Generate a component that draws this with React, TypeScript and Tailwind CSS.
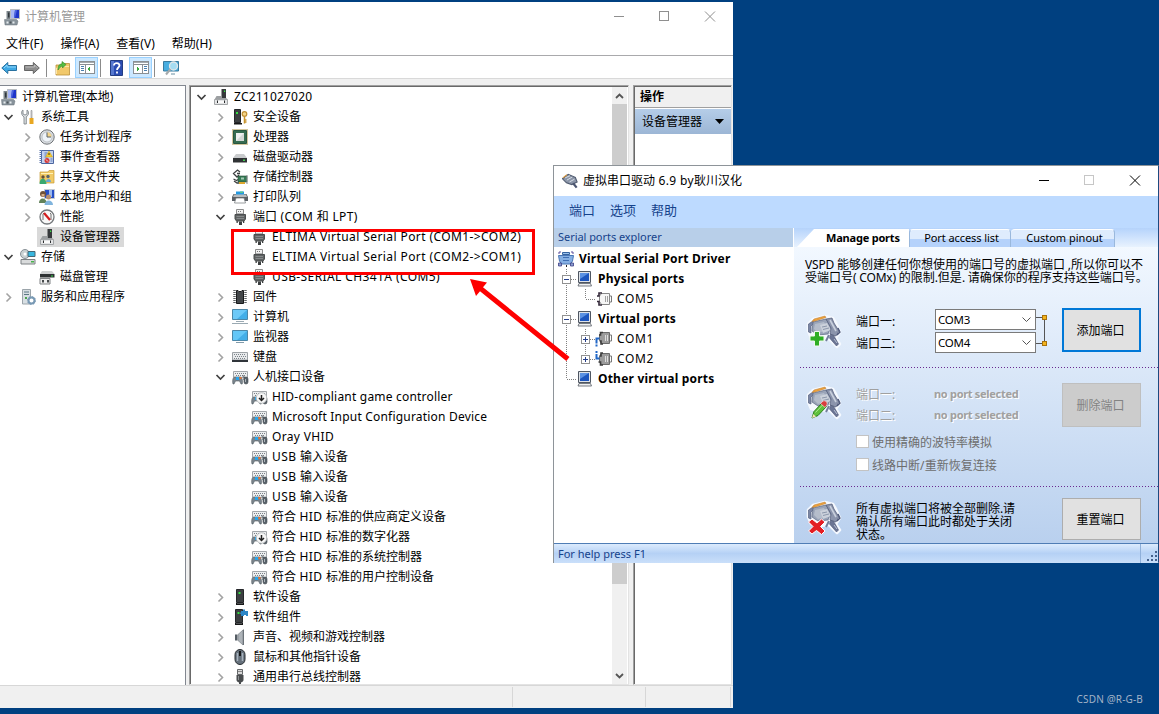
import React from 'react';
import clsx from 'clsx';

interface IconMap {
  [key: string]: React.ReactNode;
}

interface TreeItem {
  level: number;
  icon: string;
  label: string;
  state?: 'open' | 'closed';
  selected?: boolean;
  latin?: string;
}

const hidBase = (
  <>
    <path d="M1.500 2.500h14v6h-14z" fill="#eceeef" stroke="#a3a7ab" />
    <path d="M3 4.500h11M4 6.500h10" stroke="#7b8187" strokeDasharray="1 1" />
    <path d="M1 15c-.8-3-.3-7 2-7h5c2.300 0 3 4 2.200 7H9l-1.500-3h-4L2 15z" fill="#7b858d" stroke="#535c63" strokeWidth=".6" />
    <path d="M4 8h3v3H4z" fill="#2aa5ea" />
    <path d="M7.500 8h2v2h-2z" fill="#e07334" />
    <path d="M10.500 7c2-1 1.500 2 1.500 4" stroke="#454d53" />
    <rect x="12" y="8" width="4" height="7" rx="2" fill="#59636b" stroke="#3d444a" strokeWidth=".6" />
    <path d="M13.500 10v3" stroke="#aeb5ba" />
  </>
);

const pcBase = (
  <>
    <path d="M6.500.5h9v9h-9z" fill="#1f35c9" stroke="#b9bdc0" />
    <path d="M7 1h4l-1 8H7z" fill="#a6b6f5" />
    <path d="M11 1h2l-2 8h-1z" fill="#4e67e0" />
    <path d="M2.500 2h3.500v8H2.500z" fill="#7b848a" />
    <path d="M4 3.500h1.500v5H4z" fill="#30373c" />
    <path d="M.5 10.500h12l1.500 1.500-1 4H1z" fill="#87929a" stroke="#69737a" strokeWidth=".5" />
    <path d="M2.500 12.500h2v2h-2zM8.500 12.500h2v2h-2z" fill="#e6ebee" />
    <path d="M5.500 12.500h2v2h-2z" fill="#4c555b" />
  </>
);

const serverBox = (
  <>
    <path d="M4.500.5h7v13h-7z" fill="#3c3f41" stroke="#25272a" />
    <path d="M6.500 3h2v2h-2z" fill="#35df43" />
    <path d="M4 14h8v2H4z" fill="#171819" />
    <path d="M5 14.500h6" stroke="#77797a" strokeWidth=".6" />
  </>
);

const deviceBase = (
  <>
    <path d="M8.500 0H13v9H8.500z" fill="#36393b" />
    <path d="M11 1.500h1.200v1.500H11z" fill="#38e044" />
    <path d="M3.500 7h5v2H13l2 1.500H1.500z" fill="#9da0a2" />
    <path d="M1.500 10.500h13v5h-13z" fill="#e3e4e5" stroke="#a2a5a7" />
    <path d="M4 11.500h1v2.500H4zM11 11.500h1v2.500h-1z" fill="#2a2c2e" />
    <path d="M5 12h6v2H5z" fill="#fafafa" />
  </>
);

const icons: IconMap = {
  pc: pcBase,
  device: deviceBase,
  tools: (
    <>
      <path d="M3 1v4l2 1 2-1V1c2 1 2 5 0 6l-.7 1v7H4V8C1 6 1 2 3 1z" fill="#dcdfe1" stroke="#747b80" strokeWidth=".8" />
      <path d="M11 1.500h1V9h-1z" stroke="#8a8c8d" fill="#ddd" strokeWidth=".6" />
      <path d="M9.500 9h4v6h-4z" fill="#e8a722" />
    </>
  ),
  clock: (
    <>
      <circle cx="8" cy="8" r="7.200" fill="#d9dde1" stroke="#6f7377" />
      <circle cx="8" cy="8" r="5" fill="#eef3f8" stroke="#a4a9ae" strokeWidth=".6" />
      <path d="M8 3v5h4.500A4.500 4.500 0 0 0 8 3.200z" fill="#f4d58c" />
      <path d="M8 3.500V8h4" stroke="#58636c" fill="none" />
    </>
  ),
  event: (
    <>
      <path d="M2.500 1.500h12v13h-12z" fill="#c3d2ee" stroke="#4c66a0" />
      <path d="M1.500 1v14" stroke="#5d77ac" strokeWidth="2" strokeDasharray="1 1" />
      <path d="M5.500 4h3M5.500 6h2M5.500 8h3M11.500 10h2M11.500 12h2" stroke="#5c7abb" />
      <path d="M10 2l3.500 6h-7z" fill="#f4cb30" stroke="#c59c1b" strokeWidth=".5" />
      <path d="M10 4v2" stroke="#423507" />
      <circle cx="8" cy="11.500" r="2.500" fill="#d53939" />
      <path d="M7 10.500l2 2" stroke="#fff" strokeWidth=".8" />
    </>
  ),
  share: (
    <>
      <path d="M1 3h8l1-1.500h5V14H1z" fill="#f1ca65" stroke="#c79b38" strokeWidth=".7" />
      <path d="M2 4.500h12" stroke="#fff2b8" />
      <circle cx="4" cy="8" r="1.700" fill="#634d38" />
      <circle cx="9" cy="7.500" r="1.700" fill="#56626e" />
      <path d="M.5 15c0-7 6.500-7 7 0z" fill="#38a870" />
      <path d="M7 13c0-4 5-4 5 0z" fill="#68a5d8" />
    </>
  ),
  users: (
    <>
      <path d="M5.500.5h10v9h-10z" fill="#274fc5" stroke="#c4cbd2" />
      <path d="M10 1h3v7h-3z" fill="#9bb9ef" />
      <circle cx="4" cy="5" r="3" fill="#715239" />
      <path d="M2.500 5h3v2.500h-3z" fill="#d8ad85" />
      <circle cx="9.500" cy="8" r="2.500" fill="#b9906d" />
      <path d="M0 14c0-6 7-6 8 0z" fill="#62825a" />
      <path d="M5.500 16c0-6 8.500-6 8.500 0z" fill="#80b4dd" />
    </>
  ),
  perf: (
    <>
      <circle cx="8" cy="8" r="7" fill="#f8f8f8" stroke="#75797c" strokeWidth="1.300" />
      <path d="M4 11V5l1-1M11 4l1 1v6" stroke="#717171" fill="none" />
      <path d="M5 4l6 7" stroke="#d41c1c" strokeWidth="2.200" />
    </>
  ),
  storage: (
    <>
      <circle cx="5" cy="5" r="4.500" fill="#c9d1d3" stroke="#8a9298" />
      <circle cx="5" cy="5" r="1.500" fill="#fff" />
      <path d="M8 2.500h7v5H8z" fill="#38b7df" stroke="#476774" />
      <path d="M1 10.500h14v4.500H1z" fill="#d9dbdc" stroke="#7d8184" />
      <path d="M11 12h3v1.500h-3z" fill="#46b24a" />
    </>
  ),
  diskmgmt: (
    <>
      <path d="M3 2h10l2.500 3H1z" fill="#cfd1d2" />
      <path d="M1 5h14.500v3.500H1z" fill="#2e3133" />
      <path d="M12 6.500h2v1h-2z" fill="#37dc4a" />
      <path d="M1 9.500h10v5.500H1z" fill="#eee" stroke="#808385" />
      <path d="M3 11h2v2.500H3zM8 11h2v2.500H8z" fill="#45484a" />
    </>
  ),
  services: (
    <>
      <path d="M2.500.5h8V15h-8z" fill="#d8dfe3" stroke="#9ba4aa" />
      <path d="M4 3h5M4 5.500h5" stroke="#5c7885" />
      <path d="M5 8h2v2H5z" fill="#4ba34f" />
      <circle cx="11.500" cy="11.500" r="3" fill="#fff" stroke="#7899b4" strokeWidth="2" />
      <circle cx="11.500" cy="11.500" r="4" fill="none" stroke="#7899b4" strokeDasharray="1.500 1.600" />
    </>
  ),
  security: (
    <>
      <path d="M2.500.5h6v13h-6z" fill="#3c3f41" stroke="#25272a" />
      <path d="M2 14h8v1.500H2z" fill="#171819" />
      <path d="M4 3h2v2H4z" fill="#35df43" />
      <circle cx="12.500" cy="5" r="2.300" fill="#f4d58a" stroke="#c08f31" strokeWidth="1.200" />
      <path d="M12.500 8v6.500M12.500 11h2M12.500 13h2" stroke="#c8942d" strokeWidth="1.500" />
    </>
  ),
  cpu: (
    <>
      <path d="M.5.5h15v15H.5z" stroke="#a98f3c" strokeDasharray="1 1" />
      <path d="M1.500 1.500h13v13h-13z" fill="#366c50" stroke="#2a5740" />
      <path d="M4 4h8v8H4z" fill="#d3d8d5" />
      <path d="M4 4h8l-8 8z" fill="#eef0ef" />
    </>
  ),
  disk: (
    <>
      <path d="M4 5h8l3 4H1z" fill="#c9cbcd" />
      <path d="M1 9h14v4.500H1z" fill="#303234" />
      <path d="M11 10.500h2v1.500h-2z" fill="#42ce52" />
    </>
  ),
  storctl: (
    <>
      <path d="M8 3L5.500 1 1.500 4.500 5 8l2-2M5 4.500h3M1.500 10l3 1.500L8 9.500M2 12l3 2h2" fill="none" stroke="#3d4042" strokeWidth="1.300" />
      <path d="M6 7h9v6H6z" fill="#367a55" stroke="#254b37" strokeWidth=".6" />
      <path d="M9 8.500h3v2H9z" fill="#a4cab4" />
      <path d="M7 13h6v2H7z" fill="#dda72d" />
      <path d="M15 6v9" stroke="#8a8e90" />
    </>
  ),
  printer: (
    <>
      <path d="M4 2.500h8V6H4z" fill="#2499e0" />
      <path d="M8 2.500h3V4H8z" fill="#54c28d" />
      <path d="M1.500 5H4v1h8V5h2.500L16 8v4H0V8z" fill="#5b6065" />
      <path d="M2 5.500h12L15 8H1z" fill="#b6babd" />
      <path d="M4 9h8l1.500 5h-11z" fill="#fff" stroke="#6f7477" strokeWidth=".7" />
    </>
  ),
  port: (
    <>
      <path d="M4.500.5h7v5h-7z" fill="#f1f1f1" stroke="#8c8c8c" />
      <path d="M6 2.500h4M5.500 4.500h5" stroke="#777" strokeDasharray="1 1" />
      <path d="M3 5.500h10.500v4.500L12 12H4.500L3 10z" fill="#5f6263" stroke="#4b4e4f" />
      <path d="M4.500 7.500h7.500M4.500 9.500h7.500" stroke="#85898a" />
      <path d="M7 12.500h3V16H7zM4.500 12h1.300v2H4.500zM11 12h1.300v2H11z" fill="#3d4041" />
    </>
  ),
  firmware: (
    <>
      <path d="M2.500 1v14M13.500 1v14" stroke="#606466" strokeWidth="2.500" strokeDasharray="1 1" />
      <path d="M4.500 1.500h1.500l1 1h2l1-1h1.500v13h-7z" fill="#424648" stroke="#191b1c" />
    </>
  ),
  computer: (
    <>
      <path d="M.5.5h15v10H.5z" fill="#43aee8" stroke="#4c87a8" />
      <path d="M1 1h14L5 10H1z" fill="#6cc9f8" />
      <path d="M4 12.500h8M0 14.500h16" stroke="#9baab3" />
    </>
  ),
  monitor: (
    <>
      <path d="M.5 1.500h15v10H.5z" fill="#43aee8" stroke="#4c87a8" />
      <path d="M1 2h14L5 11H1z" fill="#64c7f7" />
      <path d="M4 13.500h8" stroke="#829baa" />
    </>
  ),
  keyboard: (
    <>
      <path d="M.5 3.500h15V11H.5z" fill="#e8eaec" stroke="#9da2a6" />
      <path d="M2 5.500h12M3 7.500h11M2 9.500h12" stroke="#7c8389" strokeDasharray="1 1" />
      <path d="M0 11h16v2H0z" fill="#30353a" />
    </>
  ),
  hid: hidBase,
  hidDown: (
    <>
      {hidBase}
      <circle cx="10.500" cy="9" r="5.300" fill="#f7f7f7" stroke="#b4b7b9" strokeWidth=".8" />
      <path d="M10.500 6v5M8 9l2.500 2.500L13 9" fill="none" stroke="#222" strokeWidth="1.500" />
    </>
  ),
  software: serverBox,
  component: (
    <>
      <g transform="translate(-1)">{serverBox}</g>
      <path d="M9 2h2V.5h2V2h3v5h-2v-1h-2v1H9V5h-.8V3.500H9z" fill="#2d86c6" />
    </>
  ),
  sound: (
    <>
      <path d="M3 5.500h2.500v6H3z" fill="#555d64" />
      <path d="M6 5.500L11 1v15l-5-4.500z" fill="#adb3b8" stroke="#747b81" strokeWidth=".6" />
      <path d="M11.500.5v15.500" stroke="#6b7278" />
    </>
  ),
  mouse: (
    <>
      <rect x="3" y=".5" width="10" height="15" rx="5" fill="#66717c" stroke="#282d31" />
      <path d="M5.500 4v8M10.500 4v8" stroke="#a7b2bd" strokeWidth="1.500" />
      <path d="M8 2v5" stroke="#17191a" strokeWidth="2" />
    </>
  ),
  usb: (
    <>
      <path d="M5.500.5h5v5h-5z" fill="#d9d9d9" stroke="#646769" />
      <path d="M6.500 2.500h1M8.500 2.500h1" stroke="#333" />
      <path d="M4.500 6h7v5c0 1-1 2-2.500 2.500V16H7v-2.500C5.500 13 4.500 12 4.500 11z" fill="#4a4d4f" />
      <path d="M6.500 7v4" stroke="#8c9092" />
    </>
  ),
  vspd: (
    <>
      <path d="M4.500 1.500h7v2h-7z" fill="#9bc1eb" stroke="#3462a0" />
      <path d="M.5 4.500h15l-1 5.500-2 3h-9l-2-3z" fill="#85afe3" stroke="#4b76b5" />
      <path d="M5 6.500h6M5 9.500h6" stroke="#3f6fb4" />
      <path d="M.5 12h3v3h-3zM12.500 12h3v3h-3z" fill="#8b9fd0" stroke="#3d3f86" strokeWidth=".8" />
      <path d="M1 3V1h2M13 1h2v2" stroke="#5b4d9b" />
      <path d="M8.500 14v2" stroke="#222" />
    </>
  ),
  screen: (
    <>
      <path d="M1.500.5h12v11h-12z" fill="#dfe3e8" stroke="#4e5662" />
      <path d="M3 2h9v8H3z" fill="#1c55be" />
      <path d="M3 2h9L3 8z" fill="#5a91e3" />
      <path d="M2 12.500h11.500l1 2.500H1z" fill="#f0f1f2" stroke="#555c64" strokeWidth=".8" />
    </>
  ),
  comWhite: (
    <>
      <path d="M5.500 2.500h8v11h-8l-2-3V5z" fill="#f6f6f6" stroke="#888" />
      <path d="M9.500 5v6M11.500 5v6" stroke="#a0a0a0" />
      <path d="M1 5h2V2h3M1 10.500h2V14h3" fill="none" stroke="#352a3b" strokeWidth="1.600" />
      <path d="M14 5h1.500v6H14" fill="none" stroke="#777" />
    </>
  ),
  comA: (
    <>
      <path d="M5.500 1.500h8v11h-8l-2-3V4z" fill="#9b9b9b" stroke="#6a6a6a" />
      <path d="M9.500 4v6M11.500 4v6" stroke="#ddd" />
      <path d="M3 4h1.500V1.500H7M4 10h1v3h2" fill="none" stroke="#3d3d3d" strokeWidth="1.600" />
      <path d="M14 4h1.500v6H14" fill="none" stroke="#777" />
      <path d="M.5 15.500V7.500H3.500" fill="none" stroke="#2268c8" strokeWidth="2" strokeDasharray="2 1 9" />
    </>
  ),
  comB: (
    <>
      <path d="M5.500 2.500h8v11h-8l-2-3V5z" fill="#9b9b9b" stroke="#6a6a6a" />
      <path d="M9.500 5v6M11.500 5v6" stroke="#ddd" />
      <path d="M4 5h1V2h2M2.500 11h2v3H7" fill="none" stroke="#3d3d3d" strokeWidth="1.600" />
      <path d="M14 5h1.500v6H14" fill="none" stroke="#777" />
      <path d="M.5 0v7.500H3.500" fill="none" stroke="#2268c8" strokeWidth="2" strokeDasharray="2 1 9" />
    </>
  ),
};

const Icon = ({ name }: { name: string }) => (
  <svg className="h-4 w-4 shrink-0 overflow-visible" viewBox="0 0 16 16" fill="none">
    {icons[name]}
  </svg>
);

const Label = ({ text, latin = 'tracking-[0.2px]' }: { text: string; latin?: string }) => (
  <span className="whitespace-pre">
    {text.split(/([\x20-\x7e]+)/).map((part, i) => (
      <span key={i} className={i % 2 ? latin : undefined}>
        {part}
      </span>
    ))}
  </span>
);

const Chevron = ({ state }: { state?: 'open' | 'closed' }) => (
  <svg className="h-4 w-4 shrink-0" viewBox="0 0 16 16" fill="none">
    {state === 'open' && <path d="M4.500 6L8.500 10l4-4" stroke="#404040" strokeWidth="1.700" />}
    {state === 'closed' && <path d="M6.500 4.500l4 4-4 4" stroke="#a3a3a3" strokeWidth="1.600" />}
  </svg>
);

const indents = ['pl-0', 'pl-[19px]', 'pl-[38px]'];

const TreeRow = ({ item }: { item: TreeItem }) => (
  <div className={clsx('flex h-5 shrink-0 items-center', indents[item.level])}>
    <Chevron state={item.state} />
    <div className={clsx('ml-0.5 flex h-5 items-center gap-[5px] pl-0.5', item.selected && 'bg-[#d9d9d9] pr-1')}>
      <Icon name={item.icon} />
      <Label text={item.label} latin={item.latin} />
    </div>
  </div>
);

const consoleTree: TreeItem[] = [
  { level: 0, icon: 'tools', label: '系统工具', state: 'open' },
  { level: 1, icon: 'clock', label: '任务计划程序', state: 'closed' },
  { level: 1, icon: 'event', label: '事件查看器', state: 'closed' },
  { level: 1, icon: 'share', label: '共享文件夹', state: 'closed' },
  { level: 1, icon: 'users', label: '本地用户和组', state: 'closed' },
  { level: 1, icon: 'perf', label: '性能', state: 'closed' },
  { level: 1, icon: 'device', label: '设备管理器', selected: true },
  { level: 0, icon: 'storage', label: '存储', state: 'open' },
  { level: 1, icon: 'diskmgmt', label: '磁盘管理' },
  { level: 0, icon: 'services', label: '服务和应用程序', state: 'closed' },
];

const deviceTree: TreeItem[] = [
  { level: 0, icon: 'device', label: 'ZC211027020', state: 'open' },
  { level: 1, icon: 'security', label: '安全设备', state: 'closed' },
  { level: 1, icon: 'cpu', label: '处理器', state: 'closed' },
  { level: 1, icon: 'disk', label: '磁盘驱动器', state: 'closed' },
  { level: 1, icon: 'storctl', label: '存储控制器', state: 'closed' },
  { level: 1, icon: 'printer', label: '打印队列', state: 'closed' },
  { level: 1, icon: 'port', label: '端口 (COM 和 LPT)', state: 'open', latin: 'tracking-[0.4px]' },
  { level: 2, icon: 'port', label: 'ELTIMA Virtual Serial Port (COM1->COM2)', latin: 'tracking-[0.41px]' },
  { level: 2, icon: 'port', label: 'ELTIMA Virtual Serial Port (COM2->COM1)', latin: 'tracking-[0.41px]' },
  { level: 2, icon: 'port', label: 'USB-SERIAL CH341A (COM5)', latin: 'tracking-[0.4px]' },
  { level: 1, icon: 'firmware', label: '固件', state: 'closed' },
  { level: 1, icon: 'computer', label: '计算机', state: 'closed' },
  { level: 1, icon: 'monitor', label: '监视器', state: 'closed' },
  { level: 1, icon: 'keyboard', label: '键盘', state: 'closed' },
  { level: 1, icon: 'hid', label: '人机接口设备', state: 'open' },
  { level: 2, icon: 'hidDown', label: 'HID-compliant game controller' },
  { level: 2, icon: 'hid', label: 'Microsoft Input Configuration Device' },
  { level: 2, icon: 'hid', label: 'Oray VHID', latin: 'tracking-[0.35px]' },
  { level: 2, icon: 'hid', label: 'USB 输入设备', latin: 'tracking-[0.4px]' },
  { level: 2, icon: 'hid', label: 'USB 输入设备', latin: 'tracking-[0.4px]' },
  { level: 2, icon: 'hid', label: 'USB 输入设备', latin: 'tracking-[0.4px]' },
  { level: 2, icon: 'hid', label: '符合 HID 标准的供应商定义设备', latin: 'tracking-[0.4px]' },
  { level: 2, icon: 'hidDown', label: '符合 HID 标准的数字化器', latin: 'tracking-[0.4px]' },
  { level: 2, icon: 'hid', label: '符合 HID 标准的系统控制器', latin: 'tracking-[0.4px]' },
  { level: 2, icon: 'hid', label: '符合 HID 标准的用户控制设备', latin: 'tracking-[0.4px]' },
  { level: 1, icon: 'software', label: '软件设备', state: 'closed' },
  { level: 1, icon: 'component', label: '软件组件', state: 'closed' },
  { level: 1, icon: 'sound', label: '声音、视频和游戏控制器', state: 'closed' },
  { level: 1, icon: 'mouse', label: '鼠标和其他指针设备', state: 'closed' },
  { level: 1, icon: 'usb', label: '通用串行总线控制器', state: 'closed' },
];

const WindowButtons = ({ color, maxColor }: { color: string; maxColor: string }) => (
  <svg className="h-[30px] w-[137px] shrink-0" viewBox="0 0 137 30" fill="none" shapeRendering="crispEdges">
    <path d="M18 14.500h10" stroke={color} />
    <path d="M63.500 9.500h9v9h-9z" stroke={maxColor} />
    <path d="M109 9.500l10 10M119 9.500l-10 10" stroke={color} shapeRendering="auto" />
  </svg>
);

const Separator = () => <div className="h-[18px] w-px bg-[#8b8b8b]" />;

const PaneButton = ({ flip }: { flip?: boolean }) => (
  <div className="flex h-[21px] w-[23px] items-center justify-center border border-[#99d1ff] bg-[#cce8ff]">
    <svg className="h-[13px] w-4" viewBox="0 0 16 13" shapeRendering="crispEdges">
      <path d="M.5.5h15v12H.5z" fill="#fff" stroke="#8a8f93" />
      <path d="M1 1h14v1H1z" fill="#a5aaae" />
      <path d="M1 3.500h14" stroke="#8a8f93" />
      {flip ? (
        <>
          <path d="M6.500 4v8" stroke="#8a8f93" />
          <path d="M2 5.500h3M2 7.500h3M2 9.500h3" stroke="#4a7fae" />
          <path d="M11 5.500v5L8 8z" fill="#38a93c" />
        </>
      ) : (
        <>
          <path d="M9.500 4v8" stroke="#8a8f93" />
          <path d="M11 5.500h3M11 7.500h3M11 9.500h3" stroke="#4a7fae" />
          <path d="M4 5.500v5L7 8z" fill="#38a93c" />
        </>
      )}
    </svg>
  </div>
);

const Toolbar = () => (
  <div className="flex h-[22px] shrink-0 items-center bg-white pt-px">
    <svg className="ml-px h-4 w-4" viewBox="0 0 16 16">
      <path d="M.8 8l6-5.500V5.500H15.500v5H6.800V13.500z" fill="#3fa9e5" stroke="#28719f" />
      <path d="M3 8l3-3v2h9" fill="none" stroke="#8dd5fa" />
    </svg>
    <svg className="ml-[7px] h-4 w-4" viewBox="0 0 16 16">
      <path d="M15.300 8l-6-5.500V5.500H.5v5h8.800V13.500z" fill="#8e8e8e" stroke="#656565" />
      <path d="M1.500 7h9V5l3 3" fill="none" stroke="#bbb" />
    </svg>
    <div className="ml-[6px] mr-2">
      <Separator />
    </div>
    <svg className="mr-1 h-4 w-4" viewBox="0 0 16 16">
      <path d="M1 5h5l1-1.500h7.500V15H1z" fill="#f1c86a" stroke="#bb9139" strokeWidth=".8" />
      <path d="M1.500 14V8h4l1-1.500h7.500" fill="none" stroke="#ffe7a5" />
      <path d="M3 10c0-4 1-6 4-6V1.500L11 4.500 7.500 8V6C5 6.500 5 8 3 10z" fill="#55be43" stroke="#328727" strokeWidth=".6" />
    </svg>
    <PaneButton flip />
    <div className="ml-0.5 mr-[9px]">
      <Separator />
    </div>
    <svg className="mr-1.5 h-4 w-[13px]" viewBox="0 0 13 16">
      <path d="M.5.5h12v15H.5z" fill="#2a4cb2" stroke="#233d82" />
      <path d="M1 1h3v14H1z" fill="#5678cf" />
      <path d="M4 5.500C4 2 9.500 2.500 9.500 5.500c0 2-2.500 2-2.500 4.500M7 11.500v2" stroke="#fff" strokeWidth="1.800" fill="none" />
    </svg>
    <PaneButton />
    <div className="ml-0.5 mr-2">
      <Separator />
    </div>
    <svg className="h-4 w-[17px]" viewBox="0 0 17 16">
      <path d="M.5 1.500h15V11H.5z" fill="#47ade0" stroke="#397a9e" />
      <circle cx="10.500" cy="6" r="4" fill="#a5dcf2" stroke="#e2e7e9" strokeWidth="1.300" />
      <path d="M7.500 9L3 14.500" stroke="#a4a9ab" strokeWidth="2" />
      <path d="M8 14h4" stroke="#698fa2" />
    </svg>
  </div>
);

const ScrollArrow = ({ up }: { up?: boolean }) => (
  <svg className="h-[17px] w-[15px] shrink-0" viewBox="0 0 15 17" fill="none">
    <path d={up ? 'M4 11l3.500-3.500L11 11' : 'M4 7l3.500 3.500L11 7'} stroke="#555" strokeWidth="1.800" />
  </svg>
);

const SunkenPane = ({ className, children }: { className?: string; children: React.ReactNode }) => (
  <div className={clsx('flex border-b border-l border-r border-t border-[#a0a0a0] border-b-[#e3e3e3] border-r-[#e3e3e3]', className)}>
    <div className="flex min-w-0 flex-1 border-l border-t border-[#696969] bg-white">{children}</div>
  </div>
);

const ManagementWindow = () => (
  <div className="absolute left-0 top-[2px] flex h-[706px] w-[733px] flex-col overflow-hidden bg-white">
    <div className="flex h-[30px] shrink-0 items-center justify-between pl-1">
      <div className="flex items-center gap-[5px] text-[#999]">
        <Icon name="pc" />
        <Label text="计算机管理" />
      </div>
      <WindowButtons color="#8f8f8f" maxColor="#8f8f8f" />
    </div>
    <div className="flex h-6 shrink-0 items-center gap-[17px] border-b border-[#a9a9ac] pl-1.5 pt-px">
      {['文件(F)', '操作(A)', '查看(V)', '帮助(H)'].map((menu) => (
        <Label key={menu} text={menu} latin="tracking-[0px]" />
      ))}
    </div>
    <Toolbar />
    <div className="flex h-[607px] shrink-0 border-t border-[#d9d9d9] bg-[#f0f0f0] pt-[6px]">
      <div className="flex w-[186px] flex-col border-r border-t border-[#828790] bg-white pt-px">
        <div className="flex h-5 items-center gap-[5px] pl-px">
          <Icon name="pc" />
          <Label text="计算机管理(本地)" latin="tracking-[0.1px]" />
        </div>
        {consoleTree.map((item) => (
          <TreeRow key={item.label} item={item} />
        ))}
      </div>
      <SunkenPane className="ml-[3px] w-[440px]">
        <div className="min-w-0 flex-1 overflow-hidden pl-0.5">
          {deviceTree.map((item, i) => (
            <TreeRow key={i} item={item} />
          ))}
        </div>
        <div className="mr-px flex w-[15px] shrink-0 flex-col bg-[#f0f0f0]">
          <ScrollArrow up />
          <div className="h-[480px] bg-[#cdcdcd]" />
          <div className="flex-1" />
          <ScrollArrow />
        </div>
      </SunkenPane>
      <SunkenPane className="ml-1 w-[99px]">
        <div className="flex min-w-0 flex-1 flex-col">
          <div className="flex h-[21px] items-center border-b border-[#a0a0a0] bg-[#f0f0f0] pl-[5px] font-bold">操作</div>
          <div className="mt-px flex h-[25px] items-center justify-between bg-linear-to-b from-[#b5cde8] to-[#9cb6d5] pl-[7px] pr-[7px]">
            设备管理器
            <svg className="h-[5px] w-[9px]" viewBox="0 0 9 5">
              <path d="M0 0h9L4.500 5z" />
            </svg>
          </div>
        </div>
      </SunkenPane>
    </div>
    <div className="flex flex-1 border-t border-[#d7d7d7] bg-[#f0f0f0] py-px">
      <div className="w-[513px] border-r border-[#d7d7d7]" />
      <div className="w-[133px] border-r border-[#d7d7d7]" />
      <div className="w-[85px] border-r border-[#d7d7d7]" />
    </div>
  </div>
);

const portTree = [
  { level: 0, icon: 'vspd', label: 'Virtual Serial Port Driver', bold: true },
  { level: 1, icon: 'screen', label: 'Physical ports', bold: true, box: '-' },
  { level: 2, icon: 'comWhite', label: 'COM5' },
  { level: 1, icon: 'screen', label: 'Virtual ports', bold: true, box: '-' },
  { level: 2, icon: 'comA', label: 'COM1', box: '+' },
  { level: 2, icon: 'comB', label: 'COM2', box: '+' },
  { level: 1, icon: 'screen', label: 'Other virtual ports', bold: true },
];

const PortGuides = ({ index }: { index: number }) => {
  const { level, box } = portTree[index];
  const x = level === 2 ? 27.5 : 8.5;
  const last = index === portTree.length - 1;
  return (
    <svg
      className={clsx('h-5 shrink-0', level === 1 ? 'w-[19px]' : 'w-[38px]')}
      viewBox={level === 1 ? '0 0 19 20' : '0 0 38 20'}
      shapeRendering="crispEdges"
      fill="none"
    >
      <g stroke="#808080" strokeDasharray="1 1">
        <path d={last ? 'M8.500 0v10' : 'M8.500 0v20'} />
        {level === 2 && <path d={index === 4 ? 'M27.500 0v20' : 'M27.500 0v10'} />}
        <path d={`M${x} 10.500h11`} />
      </g>
      {box && (
        <>
          <path d={`M${x - 4} 6.500h8v8h-8z`} fill="#fff" stroke="#919191" />
          <path d={`M${x - 2.5} 10.500h5`} stroke="#27408b" />
          {box === '+' && <path d={`M${x} 8v5`} stroke="#27408b" />}
        </>
      )}
    </svg>
  );
};

const Connector = ({ kind }: { kind: 'add' | 'edit' | 'remove' }) => (
  <svg className="h-9 w-9 shrink-0 overflow-visible" viewBox="0 0 36 36">
    <path
      d="M1 9l5-5 12-3 8 2 3 5 4 9-4 6 4 6-3 3-8-8-9 1-9-2-3-7z"
      fill="#f5f9ff"
      stroke="#f5f9ff"
      strokeWidth="2.500"
      strokeLinejoin="round"
    />
    <path d="M24 18l3 3 4.500 8-2 2-7-8z" fill="#6b7594" stroke="#4d5674" strokeWidth=".6" />
    <path d="M27 24l3 4" stroke="#b9c1d4" />
    <path d="M22 20l-3 6" stroke="#737e9c" strokeWidth="2" />
    <path d="M1.500 9L6 6l1 2-3 3v7l-2.500-1z" fill="#7b86a4" stroke="#56617f" strokeWidth=".7" />
    <path d="M6 7l13-3 5 8-3 7-10 1-6-4z" fill="#9aa4b8" stroke="#59647f" strokeWidth=".7" />
    <path d="M8 9l9-2 4 8-10 3-4-4z" fill="#b5bdcb" />
    <path d="M13 10l7-2 4 7-8 3z" fill="#cbd1db" />
    <path d="M15 12l5-1M16 14.500l6-1.500" stroke="#8c97ab" />
    <path d="M19 4l6-1 2 5 5 8-3 5-6-2 1-6z" fill="#8b94ac" stroke="#4f5976" strokeWidth=".7" />
    <path d="M23 5l6 11" stroke="#c8cfdc" strokeWidth="1.600" />
    <path d="M31 13l2 4-3 3" stroke="#4c5678" fill="none" strokeWidth="1.300" />
    <path d="M5 6.500L7 4l11-3 1 1.500L8 6z" fill="#efa33c" stroke="#b8762a" strokeWidth=".5" />
    {kind === 'add' && <path d="M7.500 16.500h5v4.500h4.500v5h-4.500V31h-5v-5H3v-5h4.500z" fill="#2fae24" stroke="#eef9ec" />}
    {kind === 'edit' && (
      <>
        <path d="M5 32l2-6.500 8.500-9 4 4L11 29.500z" fill="#5ec13c" stroke="#287c1b" />
        <path d="M8.500 26.500l8-8.500" stroke="#a8e88c" />
        <path d="M13.500 17.500l2-2c2.500-2 6 1 4 4l-1.500 2z" fill="#d83e3e" stroke="#fff" strokeWidth=".5" />
        <path d="M5 32l1.300-4 2.700 2.700z" fill="#f8e2b8" />
      </>
    )}
    {kind === 'remove' && (
      <path d="M5 18l5 4 4.500-4 3.500 3-4.500 4.500L18 30l-3.500 3.500L9.500 29.500 5 33l-3.500-3L6 25.500 1.500 21z" fill="#e31e24" stroke="#fff" />
    )}
  </svg>
);

const ComboBox = ({ value }: { value: string }) => (
  <div className="flex h-[21px] w-[101px] items-center justify-between border border-[#7a7a7a] bg-white pl-0.5 pr-1 text-[11.5px] leading-[17px] tracking-[-0.2px]">
    {value}
    <svg className="h-[6px] w-[9px]" viewBox="0 0 9 6" fill="none">
      <path d="M.5.5l4 4 4-4" stroke="#555" />
    </svg>
  </div>
);

const PortButton = ({ label, className }: { label: string; className?: string }) => (
  <button className={clsx('flex w-[79px] shrink-0 items-center justify-center pr-0.5 pt-0.5', className)}>{label}</button>
);

const Divider = () => (
  <svg className="ml-1.5 h-px w-[358px] shrink-0" viewBox="0 0 358 1" shapeRendering="crispEdges">
    <path d="M0 .5h358" stroke="#6b2a90" strokeDasharray="1 2" />
  </svg>
);

const CheckRow = ({ label }: { label: string }) => (
  <div className="flex h-[13px] items-center gap-[3px] text-[#6d6d6d]">
    <div className="h-[13px] w-[13px] border border-[#c3c3c3] bg-white" />
    <div className="pt-0.5">
      <Label text={label} />
    </div>
  </div>
);

const ManagePanel = () => (
  <div className="flex flex-1 flex-col bg-linear-to-b from-[#f2f8ff] to-[#b9d0ee]">
    <div className="h-[60px] shrink-0 pl-[11px] pt-[11px] leading-[13px]">
      <div>
        <Label text="VSPD 能够创建任何你想使用的端口号的虚拟端口 ,所以你可以不" latin="tracking-[-0.2px]" />
      </div>
      <div>
        <Label text="受端口号( COMx) 的限制.但是. 请确保你的程序支持这些端口号。" latin="tracking-[-0.2px]" />
      </div>
    </div>
    <div className="flex h-[60px] shrink-0 pl-[13px]">
      <div className="pt-2">
        <Connector kind="add" />
      </div>
      <div className="ml-[13px] w-[79px] pt-1 leading-[22px]">
        <div>端口一:</div>
        <div>端口二:</div>
      </div>
      <div className="flex flex-col gap-0.5 pt-[2px]">
        <ComboBox value="COM3" />
        <ComboBox value="COM4" />
      </div>
      <svg className="mt-[7px] h-8 w-[13px]" viewBox="0 0 13 32" shapeRendering="crispEdges">
        <path d="M0 3.500h8.500v26H0" fill="none" stroke="#555" />
        <path d="M6.500 1.500h4v4h-4zM6.500 27.500h4v4h-4z" fill="#f2b31c" stroke="#a9720b" />
      </svg>
      <PortButton label="添加端口" className="ml-[13px] mt-px h-11 border-2 border-[#0078d7] bg-[#e1e1e1]" />
    </div>
    <Divider />
    <div className="flex h-[118px] shrink-0 pl-[13px]">
      <div className="pt-[18px]">
        <Connector kind="edit" />
      </div>
      <div className="ml-[13px] w-[206px] pt-4 text-[#a0a0a0] [text-shadow:1px_1px_0_#fff]">
        <div className="flex h-[21px] items-center">
          <div className="w-[78px]">端口一:</div>
          <span className="text-[11px] font-bold tracking-[-0.3px]">no port selected</span>
        </div>
        <div className="flex h-[21px] items-center">
          <div className="w-[78px]">端口二:</div>
          <span className="text-[11px] font-bold tracking-[-0.3px]">no port selected</span>
        </div>
        <div className="mt-[9px] flex flex-col gap-[10px] [text-shadow:none]">
          <CheckRow label="使用精确的波特率模拟" />
          <CheckRow label="线路中断/重新恢复连接" />
        </div>
      </div>
      <PortButton label="删除端口" className="mt-[15px] h-11 border border-[#bfbfbf] bg-[#ccc] text-[#838383]" />
    </div>
    <Divider />
    <div className="flex pl-[13px]">
      <div className="pt-[14px]">
        <Connector kind="remove" />
      </div>
      <div className="ml-[13px] w-[206px] pt-[15px] leading-[13px]">
        <div>
          <Label text="所有虚拟端口将被全部删除.请" latin="tracking-[-0.2px]" />
        </div>
        <div>确认所有端口此时都处于关闭</div>
        <div>状态。</div>
      </div>
      <PortButton label="重置端口" className="mt-[11px] h-[42px] border border-[#adadad] bg-[#e1e1e1]" />
    </div>
  </div>
);

const VspdWindow = () => (
  <div className="absolute left-[553px] top-[165px] flex h-[398px] w-[606px] flex-col border border-[#8e9499] border-r-[#1d4a80] bg-white">
    <div className="flex h-[30px] shrink-0 items-center justify-between pl-2">
      <div className="flex items-center gap-[5px]">
        <svg className="h-4 w-4" viewBox="0 0 36 36">
          <path d="M1 13L14 3l16 7 4 10-12 6-12-4z" fill="#8b95a8" stroke="#505b70" strokeWidth="2.500" />
          <path d="M7 11l11-5M11 16l12-7M17 20l11-6" stroke="#e2e7ed" strokeWidth="2" />
          <path d="M2 11l9-7" stroke="#dd9c42" strokeWidth="2.500" />
          <path d="M25 23l8 10" stroke="#4b5570" strokeWidth="5" />
        </svg>
        <Label text="虚拟串口驱动 6.9 by耿川汉化" latin="tracking-[0.35px]" />
      </div>
      <WindowButtons color="#000" maxColor="#c6c6c6" />
    </div>
    <div className="flex h-8 shrink-0 items-center gap-[15px] bg-[#bddaff] pb-[3px] pl-[15px] text-[13px] text-[#15428b]">
      <span>端口</span>
      <span>选项</span>
      <span>帮助</span>
    </div>
    <div className="flex h-[315px] shrink-0">
      <div className="w-[240px] shrink-0">
        <div className="flex h-[19px] w-[239px] items-center bg-[#b8cfe9] pl-1 text-[11px] tracking-[-0.05px] text-[#15428b]">
          Serial ports explorer
        </div>
        <div className="pl-1 pt-0.5">
          {portTree.map((row, i) => (
            <div key={row.label} className="flex h-5 items-center">
              {i > 0 && <PortGuides index={i} />}
              <Icon name={row.icon} />
              <span className={clsx('ml-[5px]', row.bold ? 'font-bold tracking-[0.21px]' : 'tracking-[0.6px]')}>{row.label}</span>
            </div>
          ))}
        </div>
      </div>
      <div className="flex min-w-0 flex-1 flex-col">
        <div className="flex h-[19px] shrink-0 items-end bg-linear-to-b from-[#b5d3fb] to-[#e8f2fe] pl-[3px] text-[11px]">
          <div className="flex h-[18px] w-[112px] items-center bg-white pl-[29px] font-bold tracking-[-0.2px] [clip-path:polygon(0_100%,17px_0,100%_0,100%_100%)]">
            Manage ports
          </div>
          <div className="flex h-[18px] w-[102px] items-center justify-center rounded-t-sm border-x border-t border-[#9ab8dc] border-t-white bg-linear-to-b from-[#dfecfd] from-50% to-[#b5d2fb] to-50% pl-[3px] tracking-[-0.08px]">
            Port access list
          </div>
          <div className="flex h-[18px] w-[104px] items-center justify-center rounded-t-sm border-r border-t border-[#9ab8dc] border-t-white bg-linear-to-b from-[#dfecfd] from-50% to-[#b5d2fb] to-50% pl-1">
            Custom pinout
          </div>
        </div>
        <ManagePanel />
      </div>
    </div>
    <div className="flex flex-1 border-t border-[#4f7db5] bg-linear-to-b from-[#dcebfd] via-[#b5d1f5] to-[#cadffa]">
      <div className="flex w-[587px] items-center border-r border-[#8fb0da] pl-1 pt-0.5 text-[11px] text-[#15428b]">For help press F1</div>
      <svg className="mt-[6px] h-3 w-[17px]" viewBox="0 0 17 12" fill="#45618c">
        <path d="M14 1h2v2h-2zM10 5h2v2h-2zM14 5h2v2h-2zM6 9h2v2H6zM10 9h2v2h-2zM14 9h2v2h-2z" />
      </svg>
    </div>
  </div>
);

const Annotations = () => (
  <>
    <div className="absolute left-[231px] top-[229px] h-[46px] w-[304px] border-[3px] border-[#fe0000]" />
    <svg className="absolute left-[468px] top-[277px] h-[86px] w-[104px]" viewBox="0 0 104 86">
      <path d="M2 2l17 3.500-4 4.800L101.500 80l-3.200 4L12 14.200 8 19z" fill="#fe0000" />
    </svg>
  </>
);

export default function App() {
  return (
    <div className="relative h-[714px] w-[1159px] overflow-hidden bg-[#004080] font-['Noto_Sans','Noto_Sans_CJK_SC',sans-serif] text-[12px] text-black">
      <ManagementWindow />
      <VspdWindow />
      <Annotations />
      <div className="absolute right-4 top-[692px] text-[10px] tracking-[0.15px] text-[#a3b3c7]">CSDN @R-G-B</div>
    </div>
  );
}
